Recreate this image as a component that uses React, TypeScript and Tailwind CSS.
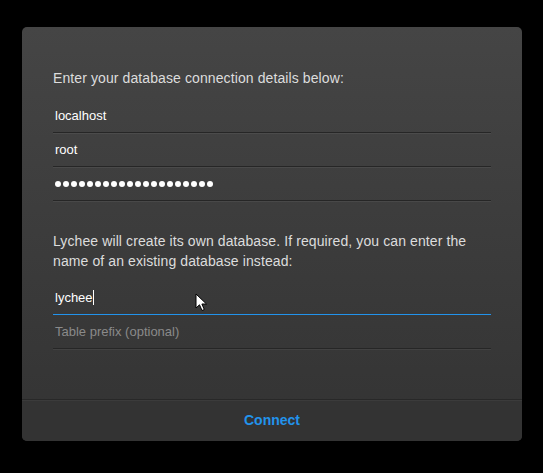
import React from "react"

const Field = ({
  children,
  focused = false,
}: {
  children: React.ReactNode
  focused?: boolean
}) => (
  <div
    className={
      "flex items-center h-[34px] px-[2px] text-[13px] " +
      (focused
        ? "border-b border-[#2293ec]"
        : "border-b border-[#262626] shadow-[0_1px_0_rgba(255,255,255,0.06)]")
    }
  >
    {children}
  </div>
)

const Cursor = () => (
  <svg
    className="absolute left-[195px] top-[293px]"
    width="14"
    height="20"
    viewBox="0 0 14 20"
  >
    <path
      d="M1 1 L1 15 L4.5 11.8 L7 17.5 L9.3 16.5 L6.9 11 L11.5 11 Z"
      fill="#fff"
      stroke="#000"
      strokeWidth="1"
      strokeLinejoin="round"
    />
  </svg>
)

export default function App() {
  return (
    <div
      className="relative w-[543px] h-[473px] bg-black pt-[27px] pl-[22px]"
      style={{ fontFamily: '"Liberation Sans", Arial, sans-serif' }}
    >
      <div className="w-[500px] h-[414px] rounded-[5px] overflow-hidden flex flex-col bg-gradient-to-b from-[#454545] to-[#333333] shadow-[0_0_6px_rgba(0,0,0,0.6)]">
        <div className="flex-1 px-[31px] pt-[41px]">
          <p className="text-[14px] leading-5 tracking-[0.1px] text-[#dddddd]">
            Enter your database connection details below:
          </p>
          <div className="mt-[11px]">
            <Field>
              <span className="text-white">localhost</span>
            </Field>
            <Field>
              <span className="text-white">root</span>
            </Field>
            <Field>
              <div className="flex gap-[2px]">
                {Array.from({ length: 20 }).map((_, i) => (
                  <span key={i} className="w-[6px] h-[6px] rounded-full bg-white" />
                ))}
              </div>
            </Field>
          </div>
          <p className="mt-[30px] text-[14px] leading-5 tracking-[0.1px] text-[#dddddd]">
            Lychee will create its own database. If required, you can enter the
            name of an existing database instead:
          </p>
          <div className="mt-[10px]">
            <Field focused>
              <span className="text-white">lychee</span>
              <span className="w-px h-[15px] bg-white" />
            </Field>
            <Field>
              <span className="text-[#8a8a8a]">Table prefix (optional)</span>
            </Field>
          </div>
        </div>
        <div className="h-[42px] flex items-center justify-center border-t border-[#282828] shadow-[inset_0_1px_0_rgba(255,255,255,0.04)] bg-[#333333]">
          <span className="text-[14px] font-bold text-[#2293ec]">Connect</span>
        </div>
      </div>
      <Cursor />
    </div>
  )
}
